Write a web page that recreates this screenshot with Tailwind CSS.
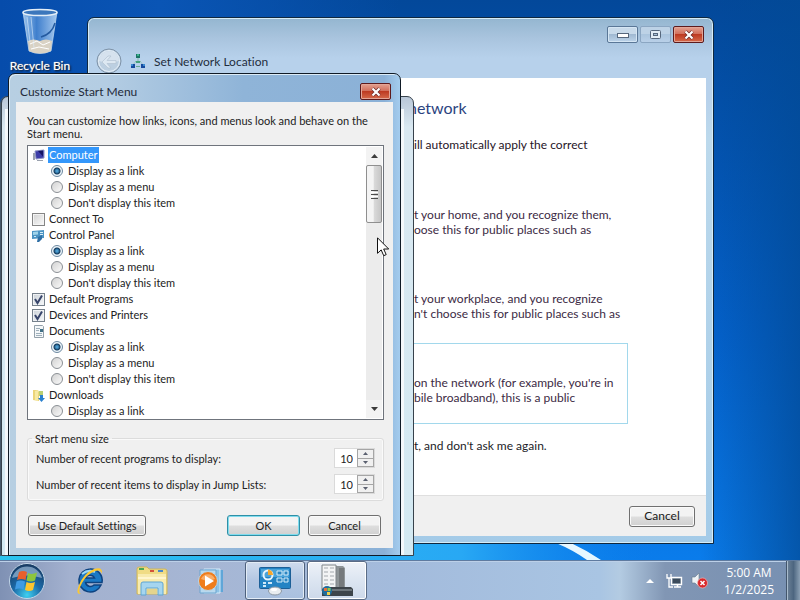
<!DOCTYPE html>
<html lang="en">
<head>
<meta charset="utf-8">
<title>Customize Start Menu</title>
<script src="https://cdn.jsdelivr.net/npm/@tailwindcss/browser@4"></script>
</head>
<body class="flex h-screen flex-col overflow-hidden bg-[#0558bd] font-[Lato,'Open_Sans',sans-serif] text-[12px] leading-[15px] text-[#1a1a1a] [font-variant-ligatures:none]">

<main class="relative min-h-0 flex-1 overflow-hidden bg-[linear-gradient(180deg,#03489a_0%,#0353b0_25%,#0463cf_60%,#0a7ceb_100%)]">
  <div class="absolute inset-y-0 left-0 w-1/2 bg-[linear-gradient(90deg,#064cab_0%,#0a55b5_40%,transparent_100%)]"></div>
  <svg class="absolute inset-0 h-full w-full" viewBox="0 0 800 560" preserveAspectRatio="none" aria-hidden="true">
    <defs>
      <linearGradient id="edge" x1="0" x2="1"><stop offset="0" stop-color="#024a96" stop-opacity="0"/><stop offset="1" stop-color="#024a96" stop-opacity=".75"/></linearGradient>
      <linearGradient id="glow" x1="0" x2="1"><stop offset="0" stop-color="#2cc4ee"/><stop offset=".7" stop-color="#28a8f4"/><stop offset="1" stop-color="#0a7ceb" stop-opacity="0"/></linearGradient>
    </defs>
    <rect x="700" width="100" height="560" fill="url(#edge)"/>
    <rect y="543" width="660" height="17" fill="url(#glow)"/>
    <path d="M556 543h15q15 7 30 17h-14q-14-10-31-17z" fill="#e6f7ff"/>
  </svg>

  <a href="#" class="absolute left-0 top-2 flex w-20 flex-col items-center text-white [text-shadow:1px_1px_2px_#000,0_0_1px_#fff]">
    <svg width="38" height="48" viewBox="0 0 38 48" aria-hidden="true">
      <defs><linearGradient id="bin" x1="0" x2="1"><stop offset="0" stop-color="#9cc4ec"/><stop offset=".4" stop-color="#3f7fcd"/><stop offset="1" stop-color="#a5c8ee"/></linearGradient></defs>
      <path d="M2 4L8 43Q19 48 30 43L36 4z" fill="url(#bin)" stroke="#b9d5ef" stroke-opacity=".8"/>
      <path d="M7 33L8 43Q19 48 30 43L31 33Q25 30 19 33Q12 30 7 33z" fill="#d9d2c4"/>
      <path d="M9 36l7-3 6 4 7-3M10 41l8-2 10 2" stroke="#fff" fill="none"/>
      <path d="M34 15Q31 26 20 29" stroke="#245a9f" stroke-width="1.500" fill="none"/>
      <path d="M10 9L13 40M6 9l3 25" stroke="#dcecfb" stroke-opacity=".6"/>
      <ellipse cx="19" cy="4.500" rx="17" ry="3" fill="#3c77bc" stroke="#e4eef7" stroke-width="1.500"/>
    </svg>
    <span class="mt-[2px] leading-[16px]">Recycle Bin</span>
  </a>

  <!-- Set Network Location window -->
  <section aria-label="Set Network Location" class="absolute left-[87px] top-[17px] flex h-[527px] w-[627px] flex-col rounded-t-[7px] border border-[#10283f] bg-[linear-gradient(180deg,#94b6d0_0px,#a9c4de_20px,#b7d1eb_40px,#b7d1eb_80px,#bcd9ec_120px,#a4cbe8_100%)] px-[7px] pb-[7px] shadow-[inset_0_0_0_1px_#d5ecf7]">
    <header class="flex h-[60px] items-start justify-between">
      <div class="flex items-center gap-2 self-end pb-1">
        <button aria-label="Back" class="ml-px">
          <svg width="26" height="26" viewBox="0 0 26 26"><circle cx="13" cy="13" r="12" fill="#bccfe1" stroke="#7f93a8"/><circle cx="13" cy="13" r="10.500" fill="none" stroke="#e6eff7"/><path d="M3 13a10 10 0 0 1 20 0q-10 3-20 0" fill="#d6e2ee"/><path d="M6 14l6-6h3l-4 4.500h9v3h-9l4 4.500h-3z" fill="#dde8f2" stroke="#b3c3d3" stroke-width=".7"/></svg>
        </button>
        <svg width="16" height="16" viewBox="0 0 16 16" aria-hidden="true"><path d="M8 5v3M3 12l3-4h4l3 4" stroke="#83b8a8" fill="none" stroke-dasharray="2 1"/><path d="M6 1h4v4H6z" fill="#1c7466"/><path d="M7 1h2v2H7z" fill="#39b58d"/><path d="M6 8h4v2H6z" fill="#43a27d"/><path d="M1 11h4v4H1zM11 11h4v4h-4z" fill="#164a9e"/><path d="M1 11h2v2H1zM13 11h2v2h-2z" fill="#3a8bd0"/><path d="M6 13h4v1H6z" fill="#68aa98"/></svg>
        <h2 class="text-[#1f2d3d]">Set Network Location</h2>
      </div>
      <div class="mr-[2px] mt-2 flex gap-[2px]">
        <button aria-label="Minimize" class="grid h-[17px] w-[31px] place-items-center rounded-[2px] border border-[#5a7797] bg-[linear-gradient(180deg,#c8daea_0_45%,#a0b9d2_50%,#bdd4ea)] shadow-[inset_0_0_0_1px_#d5e6f4]"><svg width="12" height="6" viewBox="0 0 12 6"><rect x=".5" y="1.500" width="11" height="4" fill="#fff" stroke="#56677c"/></svg></button>
        <button aria-label="Maximize" class="grid h-[17px] w-[31px] place-items-center rounded-[2px] border border-[#8ba6c2] bg-[linear-gradient(180deg,#bdd2e6_0_45%,#abc5de_50%,#b9d0e8)]"><svg width="11" height="9" viewBox="0 0 11 9"><rect x=".5" y=".5" width="10" height="8" rx="1" fill="#e3edf5" stroke="#56677c"/><rect x="3.500" y="3.500" width="4" height="2" fill="#a9c1d8" stroke="#56677c"/></svg></button>
        <button aria-label="Close" class="grid h-[17px] w-[31px] place-items-center rounded-[2px] border border-[#5d1a1c] bg-[linear-gradient(180deg,#e3a191_0%,#d2705d_45%,#bd3a22_50%,#d66a4b)] shadow-[inset_0_0_0_1px_#e3a596]"><svg width="12" height="10" viewBox="0 0 12 10"><path d="M2.500 1.500l7 7m0-7l-7 7" stroke="#6d2a2a" stroke-width="3.600"/><path d="M2.500 1.500l7 7m0-7l-7 7" stroke="#fff" stroke-width="2.200"/></svg></button>
      </div>
    </header>
    <div class="flex flex-1 flex-col bg-white pl-[319px] text-[#3c2a44]">
      <h3 class="-ml-[6px] mt-[19px] text-[16px] leading-[22px] text-[#2b4380]">network</h3>
      <p class="mt-[18px] text-[#26141f]">ill automatically apply the correct</p>
      <p class="mt-[55px] whitespace-nowrap">t your home, and you recognize them,<br>oose this for public places such as</p>
      <p class="mt-[54px] whitespace-nowrap">t your workplace, and you recognize<br>n't choose this for public places such as</p>
      <div class="-ml-[20px] mr-[78px] mt-[22px] h-[81px] whitespace-nowrap border border-[#a2d8ec] pl-[19px] pt-[31px]">on the network (for example, you're in<br>bile broadband), this is a public</div>
      <p class="mt-[14px] text-[#1c1c28]">t, and don't ask me again.</p>
    </div>
    <footer class="flex h-[41px] items-center justify-end border-t border-[#dfdfdf] bg-[#f0f0f0] pr-[11px]">
      <button class="h-[21px] w-[66px] rounded-[3px] border border-[#707070] bg-[linear-gradient(180deg,#f3f3f3_0_48%,#dedede_52%,#d0d0d0)] leading-[18px] text-[#1a1a1a] shadow-[inset_0_0_0_1px_#fafafa]">Cancel</button>
    </footer>
  </section>

  <!-- Parent properties window, mostly covered -->
  <section aria-label="Taskbar and Start Menu Properties" class="absolute left-px top-[96px] h-[460px] w-[413px] rounded-t-[7px] border border-[#37424c] bg-[linear-gradient(180deg,#b9c7d8_0px,#d9e8f1_30px,#d3e9f2_100%)] pl-[3px] pr-[9px] pt-[12px] shadow-[-1px_0_0_#47596b]">
    <div class="h-full bg-[#f4f8fb]"></div>
  </section>

  <!-- Customize Start Menu dialog -->
  <section aria-label="Customize Start Menu" class="absolute left-[8px] top-[73px] flex h-[483px] w-[393px] flex-col rounded-t-[7px] border border-[#0f1a26] bg-[linear-gradient(90deg,#b7cfe2_0%,#b4cde3_25%,#8fb4d8_60%,#8bb1d7_96%,#a4ccee_100%)] px-[7px] pb-[7px] text-[11px] leading-[13px] text-[#222] shadow-[inset_1px_1px_0_#dcebf6]">
    <header class="flex h-[28px] items-start justify-between">
      <h1 class="pl-1 pt-[10px] text-[12px] leading-[15px] text-[#1f2a3a]">Customize Start Menu</h1>
      <button aria-label="Close" class="mr-[2px] mt-[9px] grid h-[17px] w-[31px] place-items-center rounded-[2px] border border-[#5d1a1c] bg-[linear-gradient(180deg,#e3a191_0%,#d2705d_45%,#bd3a22_50%,#d66a4b)] shadow-[inset_0_0_0_1px_#e3a596]"><svg width="12" height="10" viewBox="0 0 12 10"><path d="M2.500 1.500l7 7m0-7l-7 7" stroke="#6d2a2a" stroke-width="3.600"/><path d="M2.500 1.500l7 7m0-7l-7 7" stroke="#fff" stroke-width="2.200"/></svg></button>
    </header>
    <div class="flex flex-1 flex-col bg-[#f0f0f0] pb-[12px] pl-[11px] pr-[9px] pt-[12px]">
      <p>You can customize how links, icons, and menus look and behave on the Start menu.</p>

      <div class="mt-[5px] flex h-[275px] justify-between overflow-hidden border border-[#6f747c] bg-white">
        <ul class="flex-1 pl-1 pt-px leading-4">
          <li class="flex h-4 items-center gap-[3px]"><svg width="13" height="13" viewBox="0 0 13 13" aria-hidden="true"><path d="M3 2l9-1v8l-8 1z" fill="#3c3ca8" stroke="#8c93c4"/><path d="M6 2l5-.500v6z" fill="#141464"/><path d="M1 4h2v7H1zM5 11h6v1H5z" fill="#9aa1ae"/></svg><span class="bg-[#3397fb] px-px text-white">Computer</span></li>
          <li class="pl-[19px]"><label class="flex h-4 items-center gap-[5px]"><input type="radio" name="computer" checked class="size-3 appearance-none rounded-full border border-[#8a8f94] bg-[linear-gradient(135deg,#d2d2d2,#fafafa)] checked:border-[#6c88a0] checked:bg-[radial-gradient(circle,#4a9cd0_0_1px,#12395c_3px,#eef6fb_4px)]">Display as a link</label></li>
          <li class="pl-[19px]"><label class="flex h-4 items-center gap-[5px]"><input type="radio" name="computer" class="size-3 appearance-none rounded-full border border-[#8a8f94] bg-[linear-gradient(135deg,#d2d2d2,#fafafa)] checked:border-[#6c88a0] checked:bg-[radial-gradient(circle,#4a9cd0_0_1px,#12395c_3px,#eef6fb_4px)]">Display as a menu</label></li>
          <li class="pl-[19px]"><label class="flex h-4 items-center gap-[5px]"><input type="radio" name="computer" class="size-3 appearance-none rounded-full border border-[#8a8f94] bg-[linear-gradient(135deg,#d2d2d2,#fafafa)] checked:border-[#6c88a0] checked:bg-[radial-gradient(circle,#4a9cd0_0_1px,#12395c_3px,#eef6fb_4px)]">Don't display this item</label></li>
          <li><label class="flex h-4 items-center gap-[4px]"><input type="checkbox" class="size-[13px] appearance-none border border-[#858585] bg-[linear-gradient(135deg,#d2d2d2,#fafafa)] shadow-[inset_0_0_0_1px_#f4f4f4]">Connect To</label></li>
          <li class="flex h-4 items-center gap-[4px]"><svg width="13" height="13" viewBox="0 0 13 13" aria-hidden="true"><path d="M0 2l12-1v8l-12 1z" fill="#4b93c3"/><path d="M1 3l5-.500v3l-5 .500z" fill="#9fd3ea"/><path d="M8 3h3v1H8zM8 5h3v1H8z" fill="#d7eef8"/><path d="M6 8l4-2v4l-3 3H5z" fill="#2f6fa5"/><path d="M2 7h2v1H2z" fill="#cde8f5"/></svg>Control Panel</li>
          <li class="pl-[19px]"><label class="flex h-4 items-center gap-[5px]"><input type="radio" name="control" checked class="size-3 appearance-none rounded-full border border-[#8a8f94] bg-[linear-gradient(135deg,#d2d2d2,#fafafa)] checked:border-[#6c88a0] checked:bg-[radial-gradient(circle,#4a9cd0_0_1px,#12395c_3px,#eef6fb_4px)]">Display as a link</label></li>
          <li class="pl-[19px]"><label class="flex h-4 items-center gap-[5px]"><input type="radio" name="control" class="size-3 appearance-none rounded-full border border-[#8a8f94] bg-[linear-gradient(135deg,#d2d2d2,#fafafa)] checked:border-[#6c88a0] checked:bg-[radial-gradient(circle,#4a9cd0_0_1px,#12395c_3px,#eef6fb_4px)]">Display as a menu</label></li>
          <li class="pl-[19px]"><label class="flex h-4 items-center gap-[5px]"><input type="radio" name="control" class="size-3 appearance-none rounded-full border border-[#8a8f94] bg-[linear-gradient(135deg,#d2d2d2,#fafafa)] checked:border-[#6c88a0] checked:bg-[radial-gradient(circle,#4a9cd0_0_1px,#12395c_3px,#eef6fb_4px)]">Don't display this item</label></li>
          <li><label class="flex h-4 items-center gap-[4px]"><span class="grid size-[13px]"><input type="checkbox" checked class="peer [grid-area:1/1] size-[13px] appearance-none border border-[#76818c] bg-[linear-gradient(135deg,#ccd2d8,#f6f8fa)] shadow-[inset_0_0_0_1px_#f0f2f4]"><svg class="pointer-events-none invisible [grid-area:1/1] peer-checked:visible" width="13" height="13" viewBox="0 0 13 13"><path d="M3 6l2.500 4L10 2.500" fill="none" stroke="#38456b" stroke-width="2"/></svg></span>Default Programs</label></li>
          <li><label class="flex h-4 items-center gap-[4px]"><span class="grid size-[13px]"><input type="checkbox" checked class="peer [grid-area:1/1] size-[13px] appearance-none border border-[#76818c] bg-[linear-gradient(135deg,#ccd2d8,#f6f8fa)] shadow-[inset_0_0_0_1px_#f0f2f4]"><svg class="pointer-events-none invisible [grid-area:1/1] peer-checked:visible" width="13" height="13" viewBox="0 0 13 13"><path d="M3 6l2.500 4L10 2.500" fill="none" stroke="#38456b" stroke-width="2"/></svg></span>Devices and Printers</label></li>
          <li class="flex h-4 items-center gap-[4px]"><svg width="13" height="13" viewBox="0 0 13 13" aria-hidden="true"><path d="M2.500.5h8l1 1v11h-9z" fill="#f4f7f9" stroke="#93a0aa"/><path d="M4 3h4v1H4zM4 5h3v1H4zM4 8h6v1H4zM4 10h6v1H4z" fill="#9fb0bb"/><path d="M8 4h3v3H8z" fill="#3f6f86"/></svg>Documents</li>
          <li class="pl-[19px]"><label class="flex h-4 items-center gap-[5px]"><input type="radio" name="documents" checked class="size-3 appearance-none rounded-full border border-[#8a8f94] bg-[linear-gradient(135deg,#d2d2d2,#fafafa)] checked:border-[#6c88a0] checked:bg-[radial-gradient(circle,#4a9cd0_0_1px,#12395c_3px,#eef6fb_4px)]">Display as a link</label></li>
          <li class="pl-[19px]"><label class="flex h-4 items-center gap-[5px]"><input type="radio" name="documents" class="size-3 appearance-none rounded-full border border-[#8a8f94] bg-[linear-gradient(135deg,#d2d2d2,#fafafa)] checked:border-[#6c88a0] checked:bg-[radial-gradient(circle,#4a9cd0_0_1px,#12395c_3px,#eef6fb_4px)]">Display as a menu</label></li>
          <li class="pl-[19px]"><label class="flex h-4 items-center gap-[5px]"><input type="radio" name="documents" class="size-3 appearance-none rounded-full border border-[#8a8f94] bg-[linear-gradient(135deg,#d2d2d2,#fafafa)] checked:border-[#6c88a0] checked:bg-[radial-gradient(circle,#4a9cd0_0_1px,#12395c_3px,#eef6fb_4px)]">Don't display this item</label></li>
          <li class="flex h-4 items-center gap-[4px]"><svg width="13" height="13" viewBox="0 0 13 13" aria-hidden="true"><path d="M1 1h5l1 2v9l-6-1z" fill="#ecd57a"/><path d="M3 2l3-1v11l-3-1z" fill="#f7eaa5"/><path d="M7 2h4v5H7z" fill="#b9cf74"/><path d="M8 6h3v3h2l-3.500 4L6 9h2z" fill="#2a80cf"/></svg>Downloads</li>
          <li class="pl-[19px]"><label class="flex h-4 items-center gap-[5px]"><input type="radio" name="downloads" class="size-3 appearance-none rounded-full border border-[#8a8f94] bg-[linear-gradient(135deg,#d2d2d2,#fafafa)] checked:border-[#6c88a0] checked:bg-[radial-gradient(circle,#4a9cd0_0_1px,#12395c_3px,#eef6fb_4px)]">Display as a link</label></li>
        </ul>
        <div class="my-px mr-px flex w-[16px] flex-col bg-[#ececec]">
          <button aria-label="Scroll up" class="grid h-[18px] place-items-center bg-[#f3f3f3]"><svg width="7" height="4" viewBox="0 0 7 4"><path d="M0 4L3.500 0 7 4z" fill="#3c3c3c"/></svg></button>
          <div class="flex h-[58px] flex-col items-center justify-center gap-px rounded-[2px] border border-[#8f8f8f] bg-[linear-gradient(90deg,#f4f4f4_0_45%,#dadada_50%,#c6c6c6)]">
            <span class="h-px w-[7px] bg-[#4d4d4d]"></span><span class="h-px w-[7px] bg-white"></span><span class="h-px w-[7px] bg-[#4d4d4d]"></span><span class="h-px w-[7px] bg-white"></span><span class="h-px w-[7px] bg-[#4d4d4d]"></span>
          </div>
          <button aria-label="Scroll down" class="mt-auto grid h-[18px] place-items-center bg-[#f3f3f3]"><svg width="7" height="4" viewBox="0 0 7 4"><path d="M0 0h7L3.500 4z" fill="#3c3c3c"/></svg></button>
        </div>
      </div>

      <fieldset class="mt-[12px] flex flex-col gap-[6px] rounded-[3px] border border-[#dcdcdc] px-[8px] pb-[6px] pt-[3px] shadow-[inset_0_0_0_1px_#fafafa]">
        <legend class="-ml-[4px] px-[3px]">Start menu size</legend>
        <div class="flex h-5 items-center justify-between">
          <label for="programs">Number of recent programs to display:</label>
          <div class="flex h-5 items-stretch border border-[#dadada] bg-white">
            <input id="programs" type="text" value="10" class="w-[22px] pr-[4px] text-right outline-none">
            <div class="flex w-[17px] flex-col border border-[#a5a5a5] bg-[#f0f0f0]">
              <button aria-label="More programs" class="grid flex-1 place-items-center border-b border-[#a5a5a5]"><svg width="5" height="3" viewBox="0 0 5 3"><path d="M0 3L2.500 0 5 3z" fill="#5a6070"/></svg></button>
              <button aria-label="Fewer programs" class="grid flex-1 place-items-center"><svg width="5" height="3" viewBox="0 0 5 3"><path d="M0 0h5L2.500 3z" fill="#5a6070"/></svg></button>
            </div>
          </div>
        </div>
        <div class="flex h-5 items-center justify-between">
          <label for="items">Number of recent items to display in Jump Lists:</label>
          <div class="flex h-5 items-stretch border border-[#dadada] bg-white">
            <input id="items" type="text" value="10" class="w-[22px] pr-[4px] text-right outline-none">
            <div class="flex w-[17px] flex-col border border-[#a5a5a5] bg-[#f0f0f0]">
              <button aria-label="More items" class="grid flex-1 place-items-center border-b border-[#a5a5a5]"><svg width="5" height="3" viewBox="0 0 5 3"><path d="M0 3L2.500 0 5 3z" fill="#5a6070"/></svg></button>
              <button aria-label="Fewer items" class="grid flex-1 place-items-center"><svg width="5" height="3" viewBox="0 0 5 3"><path d="M0 0h5L2.500 3z" fill="#5a6070"/></svg></button>
            </div>
          </div>
        </div>
      </fieldset>

      <div class="mt-auto flex gap-2 pl-px pr-[3px]">
        <button class="mr-auto h-[21px] w-[118px] rounded-[3px] border border-[#707070] bg-[linear-gradient(180deg,#f3f3f3_0_48%,#dedede_52%,#d0d0d0)] shadow-[inset_0_0_0_1px_#fafafa]">Use Default Settings</button>
        <button class="h-[21px] w-[73px] rounded-[3px] border border-[#2f8fa6] bg-[linear-gradient(180deg,#f3f3f3_0_48%,#dedede_52%,#d0d0d0)] shadow-[inset_0_0_0_1px_#7fdcee]">OK</button>
        <button class="h-[21px] w-[73px] rounded-[3px] border border-[#707070] bg-[linear-gradient(180deg,#f3f3f3_0_48%,#dedede_52%,#d0d0d0)] shadow-[inset_0_0_0_1px_#fafafa]">Cancel</button>
      </div>
    </div>
  </section>

  <svg class="pointer-events-none absolute left-[377px] top-[237px]" width="13" height="20" viewBox="0 0 13 20" aria-hidden="true"><path d="M.5.8v15.500l3.700-3.400 2.500 5.800 2.500-1.100-2.500-5.600h5z" fill="#fff" stroke="#111"/></svg>
</main>

<footer class="flex h-10 shrink-0 items-stretch border-t border-[#5f7ba0] bg-[linear-gradient(90deg,#7f91b4_0px,#a3b1cf_70px,#a6b6d4_200px,#a3bbdc_400px,#a9c5e3_600px,#b3cbe2_620px,#8196b4_665px,#7790b2_100%)] shadow-[inset_0_1px_0_#bcd0e8]">
  <button aria-label="Start" class="grid w-[54px] place-items-center">
    <svg width="38" height="38" viewBox="0 0 38 38">
      <defs><radialGradient id="orb" cx=".5" cy=".9" r=".9"><stop offset="0" stop-color="#3fd0f0"/><stop offset=".45" stop-color="#1b6aa8"/><stop offset="1" stop-color="#17385f"/></radialGradient></defs>
      <circle cx="19" cy="19" r="17.500" fill="url(#orb)" stroke="#c3d6e8"/><path d="M4 16a15.500 15.500 0 0 1 30 0q-15-5-30 0z" fill="#a6c3de" fill-opacity=".65"/>
      <path d="M11 10q4-2 8 0l-1.500 8q-4-2-8.500 0z" fill="#e8602c"/><path d="M20 11q4 2 9-.500l-2 8q-4 2-8.500 0z" fill="#8cc63e"/><path d="M8.500 19.500q4-2 8.500 0l-1.500 8q-4-2-8.500 0z" fill="#3f9be4"/><path d="M18.500 20q4 2 8.500 0l-2 8q-4 2-8 0z" fill="#fcc52e"/>
    </svg>
  </button>
  <button aria-label="Internet Explorer" class="grid w-[72px] place-items-center">
    <svg width="30" height="32" viewBox="0 0 30 32">
      <path d="M15 4a11.500 11.500 0 1 0 11 16h-7a5 5 0 0 1-8.500-2.500H27A11.500 11.500 0 0 0 15 4zm-4.500 9a5 5 0 0 1 9 0z" fill="#1b78c4" stroke="#0e4380" stroke-width="1.500"/>
      <path d="M7 9q6-5 13-2" stroke="#9bd8f7" stroke-width="2" fill="none"/>
      <path d="M27 9Q28 1 19 4Q9 8 4 20Q0 30 6 29Q2 27 7 18Q12 9 20 6Q26 4 27 9z" fill="#fbc832"/>
    </svg>
  </button>
  <button aria-label="Windows Explorer" class="grid w-[52px] place-items-center">
    <svg width="32" height="32" viewBox="0 0 32 32">
      <path d="M1 4q0-2 2-2h8l2 2h16q2 0 2 2v23H1z" fill="#f0dc85" stroke="#cdb55c"/><path d="M3 3h5v2H3z" fill="#4ca853"/><path d="M14 5h4v2h-4z" fill="#d4533a"/><path d="M22 5h5v2h-5z" fill="#4b87c7"/>
      <path d="M2 9h28v20H2z" fill="#f8ebae"/><path d="M2 12h28v2H2z" fill="#fff6cf"/>
      <path d="M5 30V19q0-2 2-2h18q2 0 2 2v11h-5v-7H10v7z" fill="#a5d5ef" stroke="#5fa5d3"/><path d="M11 24h10v5H11z" fill="#e4d48d"/>
    </svg>
  </button>
  <button aria-label="Windows Media Player" class="grid w-[66px] place-items-center">
    <svg width="28" height="28" viewBox="0 0 28 28">
      <path d="M10 3h16v22H10z" fill="#5fa6d8"/><path d="M7 2h16v24H7z" fill="#8ec3e6" stroke="#d4eafa"/><path d="M3 3h16v23H3z" fill="#b8d9ef" stroke="#6da5cf"/>
      <circle cx="11" cy="14" r="9.500" fill="#ef7d1c" stroke="#b9d7ea"/><path d="M4 12a7.500 7.500 0 0 1 14 0q-7 3-14 0z" fill="#f8ad68"/><path d="M8 8.500l9 5.500-9 5.500z" fill="#fff"/>
    </svg>
  </button>
  <button aria-label="Control Panel" class="ml-px grid w-[60px] place-items-center rounded-[3px] border border-[#4e617d] bg-[linear-gradient(180deg,#cfdcee,#b3c6e2_50%,#a9c0df)] shadow-[inset_0_0_0_1px_#e3ecf6]">
    <svg width="34" height="30" viewBox="0 0 34 30">
      <rect x="1.500" y="1.500" width="31" height="21" rx="1" fill="#2383c4" stroke="#1c5f97"/><path d="M3 3h28v8H3z" fill="#4aa3da"/>
      <circle cx="10" cy="9" r="4.500" fill="none" stroke="#e7f5fd" stroke-width="2"/><path d="M10 9V3.500a5.500 5.500 0 0 1 5 5.500z" fill="#f5a62e"/>
      <path d="M19 5h5v4h-5zM26 5h4v4h-4zM19 12h5v4h-5zM26 12h4v4h-4z" fill="#2c86c2" stroke="#d5edf9"/><path d="M5 16h3v2H5zM5 19h3v2H5zM10 16h4v2h-4z" fill="#cfe9f8"/>
      <ellipse cx="17" cy="25" rx="6.500" ry="4" fill="#e9edf0" stroke="#8d98a3"/><ellipse cx="16" cy="23.500" rx="3" ry="1.500" fill="#fff"/>
    </svg>
  </button>
  <button aria-label="Taskbar and Start Menu" class="ml-[2px] grid w-[60px] place-items-center rounded-[3px] border border-[#5a6c86] bg-[linear-gradient(180deg,#eef2f8,#dce5f1_50%,#cdd9ea)] shadow-[inset_0_0_0_1px_#fff]">
    <svg width="34" height="34" viewBox="0 0 34 34">
      <path d="M14 2h9l2 2v22H14z" fill="#8f9598"/><path d="M19 4h5v20h-5z" fill="#75797c"/><path d="M2 1h14v26H2z" fill="#f3f4f5" stroke="#7e8488"/>
      <path d="M4 4h4M10 4h4M4 8h4M10 8h4M4 12h4M10 12h4M4 16h4M10 16h4M4 20h4M10 20h4" stroke="#a3a8ad"/>
      <path d="M2 25l3-2h26l2 2v7H2z" fill="#3d444a"/><path d="M12 25h20v2H12z" fill="#6d757b"/><circle cx="7" cy="27" r="5" fill="#1f6d9d"/><path d="M4 24h3v3H4z" fill="#e66f3a"/><path d="M7.500 24h3v3h-3z" fill="#8ecb4c"/><path d="M7 28h3v3H7z" fill="#f0cf4c"/>
    </svg>
  </button>
  <div class="ml-auto flex items-center text-white">
    <button aria-label="Show hidden icons" class="mr-3"><svg width="8" height="4" viewBox="0 0 8 4"><path d="M0 4l4-4 4 4z" fill="#fff"/></svg></button>
    <svg class="mr-2" width="17" height="16" viewBox="0 0 17 16" role="img" aria-label="Network"><path d="M5.500 4.500h10v7h-10z" fill="#5e7083" stroke="#fff" stroke-width="1.400"/><path d="M8 14h7M11.500 12v2" stroke="#fff" stroke-width="1.500"/><path d="M1 1v4h4V1M3 5v9h4" stroke="#fff" stroke-width="1.300" fill="none"/><path d="M7 6h7v4H7z" fill="#3c4b5b"/></svg>
    <svg class="mr-4" width="17" height="17" viewBox="0 0 17 17" role="img" aria-label="Muted"><path d="M1 5h3l4-4v14l-4-4H1z" fill="#eef2f5" stroke="#66788c" stroke-width=".6"/><circle cx="11.500" cy="11" r="5" fill="#d8282b" stroke="#f3b6b6" stroke-width=".7"/><path d="M9.500 9l4 4m0-4l-4 4" stroke="#fff" stroke-width="1.500"/></svg>
    <div class="mr-3 text-center font-['Open_Sans','Noto_Sans',sans-serif] leading-[17px]"><div>5:00 AM</div><div>1/2/2025</div></div>
  </div>
  <button aria-label="Show desktop" class="w-[14px] border-l border-[#43566c] bg-[linear-gradient(90deg,#6c8197,#4d6680_50%,#8ba0b4)] shadow-[inset_1px_0_0_#a9bccd]"></button>
</footer>
</body>
</html>
